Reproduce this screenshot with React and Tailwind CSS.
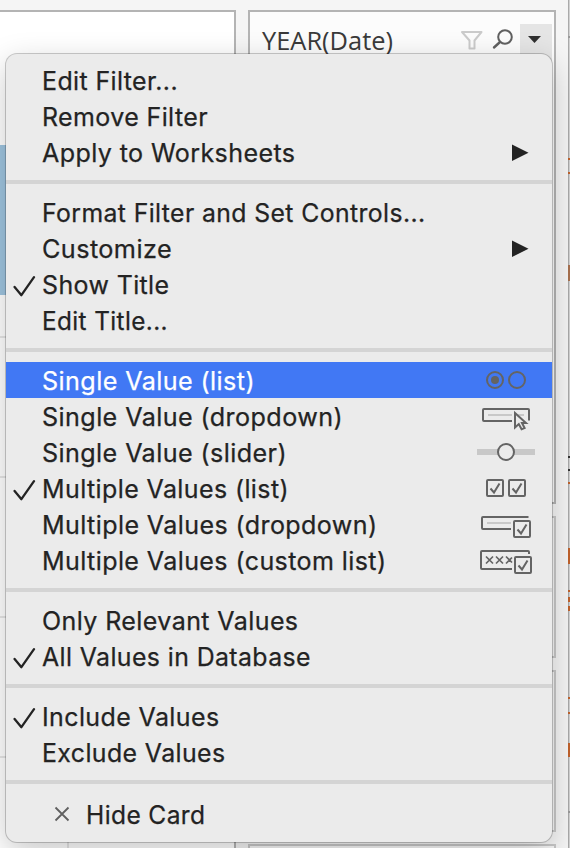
const INK = "#646464";

const Check = () => (
  <svg className="absolute left-[7px] top-[9px]" width="23" height="24" viewBox="0 0 23 24" fill="none" stroke="#232323" strokeWidth="2.3" strokeLinecap="round" strokeLinejoin="round">
    <path d="M1.6 12 8.4 20.2 21 2.2" />
  </svg>
);

const Arrow = () => (
  <svg className="absolute left-[506px] top-[10px]" width="18" height="18" viewBox="0 0 18 18">
    <path d="M0 .5 16.5 8.8 0 17Z" fill="#232323" />
  </svg>
);

/* Glyphs share a 60x36 box so that each lines up with its menu row. */
const Glyph = ({ children }) => (
  <svg className="absolute left-[470px] top-0" width="60" height="36" viewBox="0 0 60 36" fill="none" stroke={INK} strokeWidth="2">
    {children}
  </svg>
);

const RadioGlyph = () => (
  <Glyph>
    <circle cx="19" cy="18" r="8" />
    <circle cx="19" cy="18" r="4" fill={INK} stroke="none" />
    <circle cx="41" cy="18" r="8" />
  </Glyph>
);

const DropdownGlyph = () => (
  <Glyph>
    <path d="M36 23H8a1 1 0 0 1-1-1V12a1 1 0 0 1 1-1H52a1 1 0 0 1 1 1V22.5" />
    <path d="M12 17H36M42 17H48" stroke="#c8c8c8" />
    <path d="M39 15V29.5L42.8 26 45.6 31.3 48.6 30 46 25H50Z" fill="#ebebeb" />
  </Glyph>
);

const SliderGlyph = () => (
  <Glyph>
    <path d="M1 18H59" stroke="#c8c8c8" strokeWidth="6" />
    <circle cx="30" cy="18" r="8" fill="#ebebeb" />
  </Glyph>
);

const BoxesGlyph = () => (
  <Glyph>
    <rect x="11" y="10" width="16" height="16" rx="1" />
    <rect x="33" y="10" width="16" height="16" rx="1" />
    <path d="M14.5 18.5 18 22.5 23.5 13.5M36.5 18.5 40 22.5 45.5 13.5" />
  </Glyph>
);

const MultiDropdownGlyph = () => (
  <Glyph>
    <path d="M35 23H7a1 1 0 0 1-1-1V12a1 1 0 0 1 1-1H52.5" />
    <path d="M11 17H35" stroke="#c8c8c8" />
    <rect x="38" y="15" width="16" height="16" rx="1" />
    <path d="M41.5 23.5 45 27.5 50.5 18.5" />
  </Glyph>
);

const CustomListGlyph = () => (
  <Glyph>
    <path d="M36 27H6a1 1 0 0 1-1-1V10a1 1 0 0 1 1-1H52a1 1 0 0 1 1 1V12" />
    <path d="M10 14.5 17 21.5M17 14.5 10 21.5M20 14.5 27 21.5M27 14.5 20 21.5M30 14.5 36 20.5M36 15.5 30 21.5" strokeWidth="1.7" />
    <rect x="39" y="15" width="16" height="16" rx="1" />
    <path d="M42.5 23.5 46 27.5 51.5 18.5" />
  </Glyph>
);

const groups = [
  [
    { label: "Edit Filter...", width: 136 },
    { label: "Remove Filter", width: 166 },
    { label: "Apply to Worksheets", width: 253.5, icon: Arrow },
  ],
  [
    { label: "Format Filter and Set Controls...", width: 383.5 },
    { label: "Customize", width: 130, icon: Arrow },
    { label: "Show Title", width: 127.5, checked: true },
    { label: "Edit Title...", width: 126 },
  ],
  [
    { label: "Single Value (list)", width: 213, icon: RadioGlyph, active: true },
    { label: "Single Value (dropdown)", width: 301, icon: DropdownGlyph },
    { label: "Single Value (slider)", width: 245, icon: SliderGlyph },
    { label: "Multiple Values (list)", width: 247, icon: BoxesGlyph, checked: true },
    { label: "Multiple Values (dropdown)", width: 335.5, icon: MultiDropdownGlyph },
    { label: "Multiple Values (custom list)", width: 344.5, icon: CustomListGlyph },
  ],
  [
    { label: "Only Relevant Values", width: 256.5 },
    { label: "All Values in Database", width: 269, checked: true },
  ],
  [
    { label: "Include Values", width: 177.5, checked: true },
    { label: "Exclude Values", width: 183.5 },
  ],
];

/* A label of a set advance width. */
const Label = ({ text, width, fill }) => (
  <svg className="block overflow-visible" width={width} height="36">
    <text x="0" y="28" fontSize="25" letterSpacing="0.4" fill={fill} stroke={fill} strokeWidth="0.25" textLength={width} lengthAdjust="spacingAndGlyphs">{text}</text>
  </svg>
);

const Item = ({ label, width, icon: Icon, checked, active }) => (
  <div className={active ? "relative h-9 bg-[#4178f4] pl-9" : "relative h-9 pl-9"}>
    {checked && <Check />}
    <Label text={label} width={width} fill={active ? "#ffffff" : "#232323"} />
    {Icon && <Icon />}
  </div>
);

const Separator = () => (
  <div className="h-6 pt-2.5">
    <div className="h-1 bg-[#d4d4d4]" />
  </div>
);

const Menu = () => (
  <div className="absolute left-[6px] top-[54px] h-[788px] w-[546px] rounded-[11px] bg-[#ebebeb] pt-2 shadow-[0_0_0_1px_rgba(0,0,0,0.2),0_10px_32px_rgba(0,0,0,0.22)]">
    {groups.map((items, i) => (
      <div key={i}>
        {items.map((item) => <Item key={item.label} {...item} />)}
        <Separator />
      </div>
    ))}
    <div className="flex h-[38px] items-center pl-12">
      <svg className="mt-0.5" width="16" height="16" viewBox="0 0 16 16" stroke="#606060" strokeWidth="1.8">
        <path d="M1.5 1.5 14.5 14.5M14.5 1.5 1.5 14.5" />
      </svg>
      <div className="pl-4 pt-0.5"><Label text="Hide Card" width={119.5} fill="#232323" /></div>
    </div>
  </div>
);

/* Slivers of the neighbouring view: gap above, height, colour. */
const slivers = [
  [36, 2, "#9a9a9a"], [120, 2, "#c0622c"], [12, 2, "#c0622c"], [91, 16, "#a8714f"],
  [175, 2, "#333333"], [11, 2, "#333333"], [11, 2, "#c0622c"], [64, 16, "#c0622c"],
  [26, 2, "#c0622c"], [5, 5, "#c0622c"], [4, 5, "#c0622c"], [86, 2, "#c0622c"],
  [13, 2, "#c0622c"], [29, 14, "#c0622c"], [54, 2, "#9a9a9a"],
];

export default function App() {
  return (
    <div className="relative flex h-[848px] w-[570px] overflow-hidden bg-[#f5f5f5] font-['Inter',sans-serif]">
      <div className="mt-2.5 h-[838px] w-[236px] shrink-0 border-r-2 border-t-2 border-[#b4b4b4] bg-white">
        <div className="h-[133px]" />
        <div className="h-[150px] bg-[#9fc5e0]" />
        <div className="h-[43px] border-b-2 border-[#e6e6e6]" />
        <div className="h-[140px] border-b-2 border-[#e6e6e6]" />
        <div className="h-[140px] border-b-2 border-[#e6e6e6]" />
        <div className="h-[140px] border-b-2 border-[#e6e6e6]" />
        <div className="ml-[67px] h-[90px] w-0.5 bg-[#e6e6e6]" />
      </div>
      <div className="ml-3 flex w-[308px] shrink-0 flex-col gap-3 pt-2.5">
        <div className="h-[494px] shrink-0 border-2 border-[#b4b4b4] bg-[#fcfcfc]">
          <div className="mt-3 flex h-8 pl-3">
            <svg className="shrink-0 overflow-visible" width="132" height="36">
              <text x="0" y="26" fontFamily="Open Sans, sans-serif" fontSize="24.6" fill="#3a3a3a" textLength="131" lengthAdjust="spacingAndGlyphs">YEAR(Date)</text>
            </svg>
            <svg className="ml-[65px] mt-[5px] shrink-0" width="61" height="24" viewBox="0 0 61 24" fill="none">
              <path d="M3 3H22.5L15.5 11.5V19.5H10.5V11.5Z" stroke="#cbcbcb" strokeWidth="2" strokeLinejoin="round" />
              <circle cx="46" cy="8" r="6.8" stroke="#606060" strokeWidth="2" />
              <path d="M41 13 35 18.5" stroke="#606060" strokeWidth="2.4" strokeLinecap="round" />
            </svg>
            <div className="h-10 w-8 shrink-0 bg-[#e5e5e5] pl-2 pt-3">
              <svg width="13" height="8"><path d="M0 0H13L6.5 7Z" fill="#303030" /></svg>
            </div>
          </div>
        </div>
        <div className="h-[142px] shrink-0 border-2 border-[#c8c8c8] bg-[#f7f7f7]" />
        <div className="h-[162px] shrink-0 border-2 border-[#c8c8c8] bg-[#f7f7f7]" />
        <div className="h-[40px] shrink-0 border-2 border-[#c8c8c8] bg-[#f7f7f7]" />
      </div>
      <div className="ml-3 h-full w-0.5 shrink-0 border-l border-[#aaaaaa] bg-[#d2d2d2]">
        {slivers.map(([gap, height, color], i) => (
          <div key={i} style={{ paddingTop: gap }}>
            <div className="-ml-px w-0.5" style={{ height, backgroundColor: color }} />
          </div>
        ))}
      </div>
      <Menu />
    </div>
  );
}
